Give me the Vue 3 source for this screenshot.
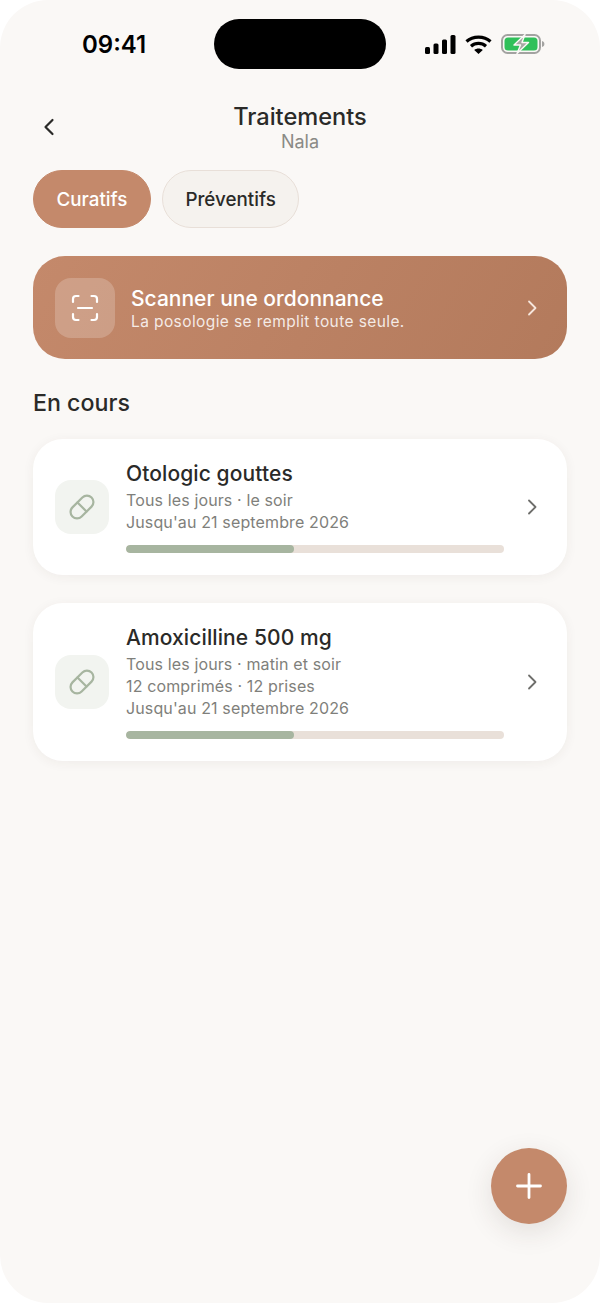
<template>
  <div class="phone">
    <!-- Status bar -->
    <div class="status-bar">
      <span class="time">09:41</span>
      <div class="island"></div>
      <div class="status-icons">
        <svg width="31" height="19" viewBox="0 0 31 19">
          <rect x="0" y="12" width="5" height="7" rx="1.5" fill="#000" />
          <rect x="8.5" y="8.5" width="5" height="10.5" rx="1.5" fill="#000" />
          <rect x="17" y="4.5" width="5" height="14.5" rx="1.5" fill="#000" />
          <rect x="25.5" y="0" width="5" height="19" rx="1.5" fill="#000" />
        </svg>
        <svg width="27" height="19" viewBox="0 0 27 19">
          <path d="M1.5 6.5C8 .6 19 .6 25.5 6.5" fill="none" stroke="#000" stroke-width="3.2" />
          <path d="M6 11.2c4.3-3.7 10.7-3.7 15 0" fill="none" stroke="#000" stroke-width="3.2" />
          <path d="M9.2 15 13.5 19l4.3-4c-2.5-2-6.100-2-8.600 0Z" fill="#000" />
        </svg>
        <svg width="44" height="20" viewBox="0 0 44 20">
          <rect x="1" y="1" width="38" height="18" rx="5.500" fill="none" stroke="#a3a3a1" stroke-width="2" />
          <rect x="3.500" y="3.500" width="33" height="13" rx="3.500" fill="#30c05a" />
          <path d="M41 7c1.500.4 2.400 1.500 2.400 3s-.9 2.600-2.400 3Z" fill="#a3a3a1" />
          <path d="M24 .5 13 11h6.500L16 19.500 27.500 8.500H21Z" fill="#a8a9a5" stroke="#faf8f6" stroke-width="1.400" stroke-linejoin="round" />
        </svg>
      </div>
    </div>

    <!-- Header -->
    <header class="nav">
      <button class="back" aria-label="Retour">
        <svg width="24" height="24" viewBox="0 0 24 24">
          <path d="M15.500 5 8.500 12l7 7" fill="none" stroke="#2a2a28" stroke-width="2.200" stroke-linecap="round" stroke-linejoin="round" />
        </svg>
      </button>
      <div class="nav-title">
        <h1>Traitements</h1>
        <p>Nala</p>
      </div>
    </header>

    <div class="tabs">
      <button
        v-for="tab in tabs"
        :key="tab"
        class="tab"
        :class="{ active: tab === activeTab }"
        @click="activeTab = tab"
      >{{ tab }}</button>
    </div>

    <!-- Scan banner -->
    <div class="scan-card">
      <div class="scan-icon">
        <svg width="28" height="28" viewBox="0 0 28 28">
          <path
            d="M2 8V5a3 3 0 0 1 3-3h2.500M20.500 2H23a3 3 0 0 1 3 3v3M26 20v3a3 3 0 0 1-3 3h-2.500M7.500 26H5a3 3 0 0 1-3-3v-3M7 14h14"
            fill="none" stroke="#fff" stroke-width="2.200" stroke-linecap="round"
          />
        </svg>
      </div>
      <div class="scan-text">
        <div class="scan-title">Scanner une ordonnance</div>
        <div class="scan-sub">La posologie se remplit toute seule.</div>
      </div>
      <svg class="chevron" width="24" height="24" viewBox="0 0 24 24">
        <path d="m9 5.500 6.500 6.500L9 18.500" fill="none" stroke="#f6e6dc" stroke-width="1.800" stroke-linecap="round" stroke-linejoin="round" />
      </svg>
    </div>

    <h2 class="section-title">En cours</h2>

    <!-- Treatments -->
    <div class="list">
      <div v-for="item in treatments" :key="item.name" class="card">
        <div class="pill-icon">
          <svg width="30" height="30" viewBox="0 0 30 30">
            <g fill="none" stroke="#a7b5a0" stroke-width="2.200" stroke-linecap="round">
              <rect x="1.500" y="8.500" width="27" height="13" rx="6.500" transform="rotate(-45 15 15)" />
              <path d="m10.500 10.500 9 9" />
            </g>
          </svg>
        </div>
        <div class="card-body">
          <div class="card-title">{{ item.name }}</div>
          <div v-for="line in item.lines" :key="line" class="card-line">{{ line }}</div>
          <div class="progress">
            <div class="progress-fill" :style="{ width: item.progress + '%' }"></div>
          </div>
        </div>
        <svg class="chevron" width="24" height="24" viewBox="0 0 24 24">
          <path d="m9 5.500 6.500 6.500L9 18.500" fill="none" stroke="#6e6e6b" stroke-width="1.800" stroke-linecap="round" stroke-linejoin="round" />
        </svg>
      </div>
    </div>

    <button class="fab" aria-label="Ajouter">
      <svg width="28" height="28" viewBox="0 0 28 28">
        <path d="M14 2.500v23M2.500 14h23" fill="none" stroke="#fff" stroke-width="2.800" stroke-linecap="round" />
      </svg>
    </button>
  </div>
</template>

<script setup>
import { ref } from 'vue';

const tabs = ['Curatifs', 'Préventifs'];
const activeTab = ref('Curatifs');

const treatments = [
  {
    name: 'Otologic gouttes',
    lines: ['Tous les jours · le soir', "Jusqu'au 21 septembre 2026"],
    progress: 44.4
  },
  {
    name: 'Amoxicilline 500 mg',
    lines: ['Tous les jours · matin et soir', '12 comprimés · 12 prises', "Jusqu'au 21 septembre 2026"],
    progress: 44.4
  }
];
</script>

<style>
html,
body {
  margin: 0;
  background: #fff;
}
</style>

<style scoped>
.phone {
  position: relative;
  width: 600px;
  height: 1303px;
  box-sizing: border-box;
  padding: 0 33px;
  overflow: hidden;
  background: #faf8f6;
  border-radius: 48px;
  font-family: Inter, "Noto Sans", sans-serif;
  color: #2a2a28;
}

.status-bar {
  display: flex;
  justify-content: space-between;
  align-items: center;
  height: 88px;
  padding: 0 22px 0 49px;
}

.time {
  font-size: 24px;
  font-weight: 600;
  color: #000;
}

.island {
  position: absolute;
  top: 19px;
  left: 214px;
  width: 172px;
  height: 50px;
  border-radius: 25px;
  background: #000;
}

.status-icons {
  display: flex;
  align-items: center;
  gap: 9px;
}

.status-icons svg {
  display: block;
}

.nav {
  position: relative;
  height: 82px;
}

.back {
  position: absolute;
  left: 4px;
  top: 27px;
  padding: 0;
  border: none;
  background: none;
}

.back svg {
  display: block;
}

.nav-title {
  text-align: center;
  padding-top: 13px;
}

.nav-title h1 {
  margin: 0;
  font-size: 23.6px;
  line-height: 31px;
  font-weight: 450;
}

.nav-title p {
  margin: 0;
  font-size: 18px;
  line-height: 20px;
  color: #8a8a86;
}

.tabs {
  display: flex;
  gap: 11px;
}

.tab {
  height: 58px;
  padding: 0 22.500px;
  border: 1px solid #e8dfd8;
  border-radius: 29px;
  background: #f5f2ee;
  font: 450 18.800px Inter, sans-serif;
  color: #2a2a28;
}

.tab.active {
  border-color: #c4896b;
  background: #c4896b;
  color: #fff;
}

.scan-card {
  display: flex;
  align-items: center;
  height: 103px;
  box-sizing: border-box;
  margin-top: 28px;
  padding: 0 22px;
  border-radius: 32px;
  background: linear-gradient(120deg, #c4896b, #b37a5c);
  color: #fff;
}

.scan-icon {
  display: flex;
  align-items: center;
  justify-content: center;
  flex: none;
  width: 60px;
  height: 60px;
  border-radius: 16px;
  background: rgba(255, 255, 255, 0.2);
}

.scan-text {
  flex: 1;
  margin-left: 16px;
  padding-top: 2px;
}

.scan-title {
  font-size: 21px;
  line-height: 26px;
  font-weight: 450;
}

.scan-sub {
  font-size: 15.500px;
  line-height: 20px;
  letter-spacing: 0.4px;
  color: rgba(255, 255, 255, 0.85);
}

.chevron {
  flex: none;
  margin-right: 1px;
}

.section-title {
  margin: 29px 0 21px;
  font-size: 23.200px;
  line-height: 30px;
  font-weight: 450;
}

.list {
  display: flex;
  flex-direction: column;
  gap: 28.500px;
}

.card {
  display: flex;
  align-items: center;
  box-sizing: border-box;
  padding: 22px 22px 21.500px;
  border-radius: 30px;
  background: #fff;
  box-shadow: 0 2px 12px rgba(60, 45, 35, 0.06);
}

.pill-icon {
  display: flex;
  align-items: center;
  justify-content: center;
  flex: none;
  width: 54px;
  height: 54px;
  border-radius: 16px;
  background: #f2f4f0;
}

.card-body {
  flex: 1;
  margin: 0 16px 0 17px;
}

.card-title {
  font-size: 21px;
  line-height: 26px;
  letter-spacing: 0.1px;
  font-weight: 450;
  margin-bottom: 2px;
}

.card-line {
  font-size: 16px;
  line-height: 22px;
  letter-spacing: 0.13px;
  color: #7f7f7b;
}

.progress {
  height: 8px;
  margin-top: 12px;
  border-radius: 4px;
  background: #e9e0d9;
  overflow: hidden;
}

.progress-fill {
  height: 100%;
  border-radius: 4px;
  background: #a7b5a0;
}

.fab {
  position: absolute;
  right: 33px;
  bottom: 79px;
  display: flex;
  align-items: center;
  justify-content: center;
  width: 76px;
  height: 76px;
  padding: 0;
  border: none;
  border-radius: 50%;
  background: #c4896b;
  box-shadow: 0 8px 28px rgba(60, 45, 35, 0.12);
}
</style>
